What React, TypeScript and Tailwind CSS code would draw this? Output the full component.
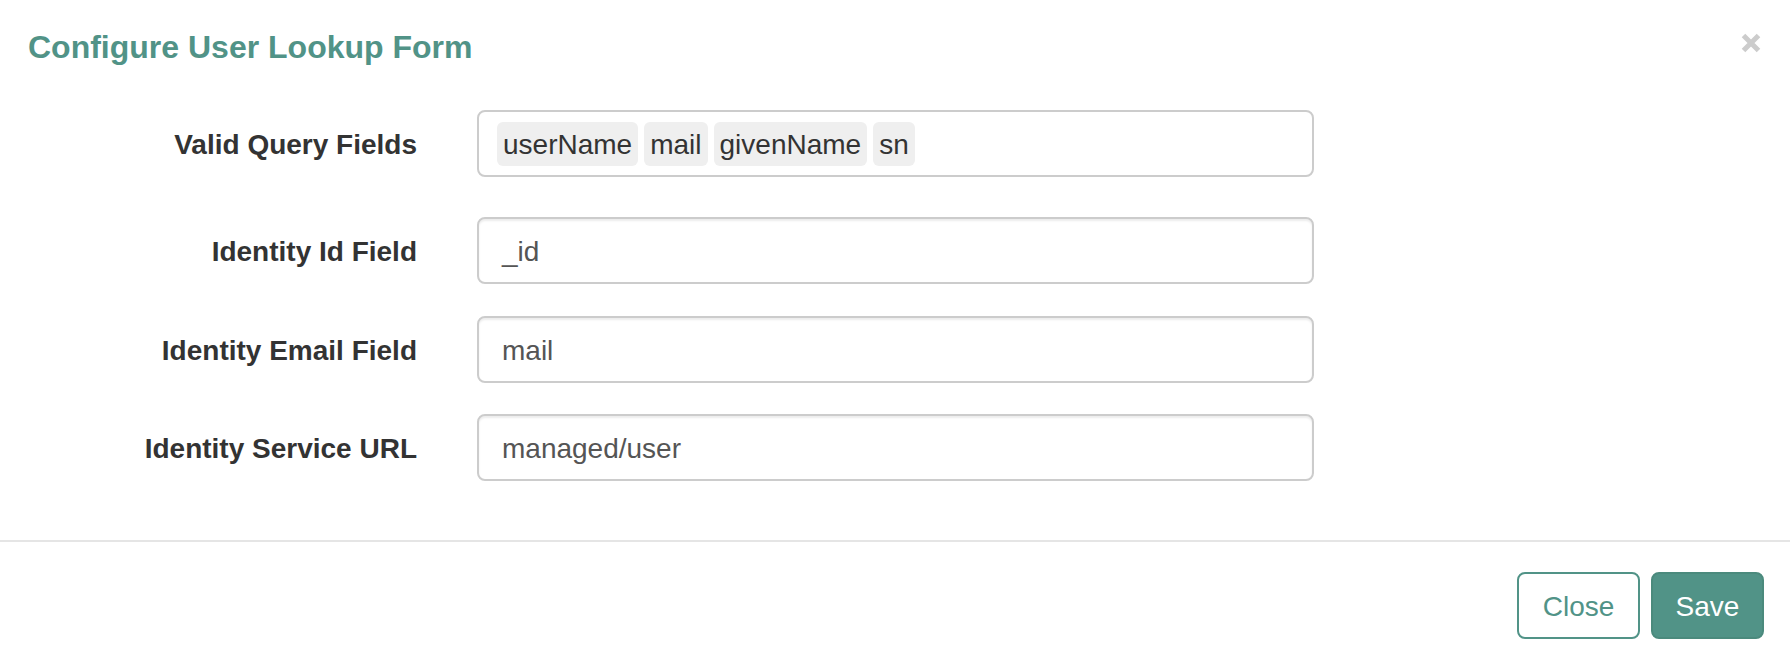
import React from "react";

function Row({ label, children, className }: { label: string; children: React.ReactNode; className?: string }) {
  return (
    <div className={`flex items-center ${className ?? ""}`}>
      <div className="w-[417px] shrink-0 pt-[3px] text-right text-[28px] font-bold text-[#333333] leading-none">{label}</div>
      <div className="ml-[60px] w-[837px]">{children}</div>
    </div>
  );
}

function TextInput({ value }: { value: string }) {
  return (
    <div className="h-[67px] w-full rounded-[8px] border-2 border-[#cccccc] bg-white shadow-[inset_0_2px_2px_rgba(0,0,0,0.075)] flex items-center pl-[23px] pt-[3px] text-[28px] text-[#555555]">
      {value}
    </div>
  );
}

export default function App() {
  const chips = ["userName", "mail", "givenName", "sn"];
  return (
    <div className="w-[1790px] h-[666px] bg-white flex flex-col font-['Liberation_Sans',Arial,sans-serif] overflow-hidden">
      <div className="relative pt-[30px] pl-[28px]">
        <h4 className="text-[32px] leading-[35px] font-bold text-[#519387] m-0">Configure User Lookup Form</h4>
        <button className="absolute left-[1741px] top-[33px] w-[20px] h-[20px]" aria-label="Close">
          <svg width="20" height="20" viewBox="0 0 20 20">
            <path d="M2.5 2.5 L17.5 17.5 M17.5 2.5 L2.5 17.5" stroke="#cccccc" strokeWidth="5" strokeLinecap="butt" />
          </svg>
        </button>
      </div>
      <div className="pt-[45px] pb-[59px] flex flex-col">
        <Row label="Valid Query Fields">
          <div className="h-[67px] w-full rounded-[8px] border-2 border-[#cccccc] bg-white flex items-center pl-[18px] gap-[6px]">
            {chips.map((c) => (
              <span key={c} className="h-[44px] flex items-center px-[6px] pt-[2px] rounded-[6px] bg-[#efefef] text-[28px] text-[#333333]">
                {c}
              </span>
            ))}
          </div>
        </Row>
        <Row label="Identity Id Field" className="mt-[40px]">
          <TextInput value="_id" />
        </Row>
        <Row label="Identity Email Field" className="mt-[32px]">
          <TextInput value="mail" />
        </Row>
        <Row label="Identity Service URL" className="mt-[31px]">
          <TextInput value="managed/user" />
        </Row>
      </div>
      <div className="h-[2px] bg-[#e5e5e5]" />
      <div className="flex justify-end pt-[30px] pr-[26px] gap-[11px]">
        <button className="h-[67px] w-[123px] rounded-[8px] border-2 border-[#519387] bg-white pt-[2px] text-[28px] text-[#519387]">Close</button>
        <button className="h-[67px] w-[113px] rounded-[8px] border-2 border-[#4b8a7d] bg-[#519387] pt-[2px] text-[28px] text-white">Save</button>
      </div>
    </div>
  );
}
